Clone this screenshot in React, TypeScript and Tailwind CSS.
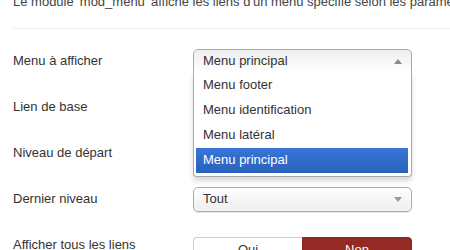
import React from 'react'

const options = ['Menu footer', 'Menu identification', 'Menu latéral', 'Menu principal']

function Arrow({ up }: { up?: boolean }) {
  return (
    <svg width="8" height="5" viewBox="0 0 8 5" className="shrink-0">
      {up ? <path d="M0 5 L4 0 L8 5 Z" fill="#8a8a8a" /> : <path d="M0 0 L8 0 L4 5 Z" fill="#9a9a9a" />}
    </svg>
  )
}

export default function App() {
  return (
    <div
      className="w-[450px] h-[250px] overflow-hidden bg-white text-[13px] leading-[18px] text-[#333]"
      style={{ fontFamily: '"Liberation Sans", Arial, sans-serif' }}
    >
      <div className="pl-[13px] mt-[-7px] whitespace-nowrap text-[#444]">
        Le module 'mod_menu' affiche les liens d'un menu spécifié selon les paramètres du module.
      </div>
      <div className="ml-[13px] mt-[17px] border-t border-[#eeeeee]" />

      <div className="mt-[9px] pl-[13px]">
        {/* Menu à afficher */}
        <div className="flex items-center h-[46px]">
          <div className="w-[180px]">Menu à afficher</div>
          <div className="relative w-[219px]">
            <div className="flex items-center justify-between h-[25px] px-[9px] border border-[#aaaaaa] rounded-t-[5px] bg-gradient-to-b from-[#eeeeee] to-[#ffffff]">
              <span>Menu principal</span>
              <Arrow up />
            </div>
            <div className="absolute left-0 right-0 top-[24px] z-10 bg-white border border-t-0 border-[#aaaaaa] rounded-b-[4px] shadow-[0_4px_5px_rgba(0,0,0,0.15)] pl-[2px] pr-[3px] pb-[3px]">
              {options.map((o) => (
                <div
                  key={o}
                  className={
                    o === 'Menu principal'
                      ? 'h-[25px] flex items-center px-[7px] text-white bg-gradient-to-b from-[#3875d7] to-[#2a62bc]'
                      : 'h-[25px] flex items-center px-[7px]'
                  }
                >
                  {o}
                </div>
              ))}
            </div>
          </div>
        </div>

        <div className="flex items-center h-[46px]">
          <div className="w-[180px]">Lien de base</div>
        </div>

        <div className="flex items-center h-[46px]">
          <div className="w-[180px]">Niveau de départ</div>
        </div>

        {/* Dernier niveau */}
        <div className="flex items-center h-[46px]">
          <div className="w-[180px]">Dernier niveau</div>
          <div className="flex items-center justify-between w-[219px] h-[25px] px-[9px] border border-[#aaaaaa] rounded-[5px] bg-gradient-to-b from-[#ffffff] via-[#f6f6f6] to-[#eeeeee] shadow-[inset_0_0_3px_#fff,0_1px_1px_rgba(0,0,0,0.1)]">
            <span>Tout</span>
            <Arrow />
          </div>
        </div>

        {/* Afficher tous les liens */}
        <div className="flex items-start h-[46px]">
          <div className="w-[180px] mt-[14px]">Afficher tous les liens</div>
          <div className="flex mt-[15px] w-[219px]">
            <div className="flex-1 h-[28px] pt-[3px] text-center border border-[#cccccc] border-r-0 rounded-l-[4px] bg-white">
              Oui
            </div>
            <div className="flex-1 h-[28px] pt-[3px] text-center border border-[#8a2520] rounded-r-[4px] bg-[#942a25] text-white">
              Non
            </div>
          </div>
        </div>
      </div>
    </div>
  )
}
